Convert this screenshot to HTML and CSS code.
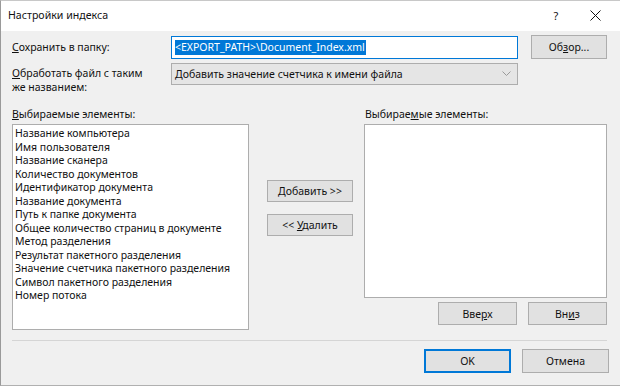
FILE: index.html
```
<!DOCTYPE html>
<html lang="ru">
<head>
<meta charset="utf-8">
<title>Настройки индекса</title>
<link rel="stylesheet" href="styles.css">
</head>
<body>
<div class="dialog">
  <div class="titlebar">
    <span class="title">Настройки индекса</span>
    <span class="tb-help">?</span>
    <span class="tb-close">
      <svg width="11" height="11" viewBox="0 0 11 11"><path d="M0.5 0.5 L10.5 10.5 M10.5 0.5 L0.5 10.5" stroke="#111" stroke-width="1" fill="none"/></svg>
    </span>
  </div>
  <div class="content">
    <div class="row row-save">
      <label class="lbl"><u>С</u>охранить в папку:</label>
      <div class="textbox"><span class="sel">&lt;EXPORT_PATH&gt;\Document_Index.xml</span></div>
      <button class="btn btn-browse">Об<u>з</u>ор...</button>
    </div>
    <div class="row row-dup">
      <label class="lbl lbl-2"><u>О</u>бработать файл с таким<br>же названием:</label>
      <div class="combo">
        <span>Добавить значение счетчика к имени файла</span>
        <svg class="chev" width="9" height="6" viewBox="0 0 9 6"><path d="M0.5 0.5 L4.5 4.5 L8.5 0.5" stroke="#9a9a9a" stroke-width="1" fill="none"/></svg>
      </div>
    </div>
    <div class="lists">
      <div class="col-left">
        <div class="list-lbl"><u>В</u>ыбираемые элементы:</div>
        <ul class="listbox left-box">
          <li>Название компьютера</li>
          <li>Имя пользователя</li>
          <li>Название сканера</li>
          <li>Количество документов</li>
          <li>Идентификатор документа</li>
          <li>Название документа</li>
          <li>Путь к папке документа</li>
          <li>Общее количество страниц в документе</li>
          <li>Метод разделения</li>
          <li>Результат пакетного разделения</li>
          <li>Значение счетчика пакетного разделения</li>
          <li>Символ пакетного разделения</li>
          <li>Номер потока</li>
        </ul>
      </div>
      <div class="col-mid">
        <button class="btn btn-mid"><u>Д</u>обавить &gt;&gt;</button>
        <button class="btn btn-mid">&lt;&lt; <u>У</u>далить</button>
      </div>
      <div class="col-right">
        <div class="list-lbl list-lbl-r">Выбирае<u>м</u>ые элементы:</div>
        <div class="listbox right-box"></div>
        <div class="order-btns">
          <button class="btn btn-order">Вве<u>р</u>х</button>
          <button class="btn btn-order">Вн<u>и</u>з</button>
        </div>
      </div>
    </div>
    <div class="sep"></div>
    <div class="footer">
      <button class="btn btn-foot btn-default">OK</button>
      <button class="btn btn-foot">Отмена</button>
    </div>
  </div>
</div>
</body>
</html>
```
FILE: styles.css
```
* { box-sizing: border-box; }
html, body {
  margin: 0;
  padding: 0;
  background: #f0f0f0;
}
body {
  font-family: "Noto Sans", "Open Sans", sans-serif;
  font-size: 10.5px;
  color: #111;
}
u { text-decoration: underline; text-underline-offset: 1px; }
.dialog {
  width: 620px;
  height: 386px;
  border-left: 1px solid #9a9a9a;
  border-top: 1px solid #c8c8c8;
  border-bottom: 1px solid #b0b0b0;
  background: #f0f0f0;
  display: flex;
  flex-direction: column;
}
.titlebar {
  height: 30px;
  background: #fff;
  display: flex;
  align-items: center;
  padding: 0 0 2px 7px;
  flex-shrink: 0;
}
.title { font-size: 10.6px; flex: 1; }
.tb-help {
  width: 14px;
  font-size: 11px;
  margin-right: 27px;
  text-align: center;
}
.tb-close {
  width: 12px;
  margin-right: 18px;
  display: flex;
}
.content {
  flex: 1;
  padding: 4px 12px 0 11px;
  display: flex;
  flex-direction: column;
}
.row { display: flex; }
.row-save { align-items: center; height: 24px; }
.lbl { width: 159px; flex-shrink: 0; line-height: 14px; white-space: nowrap; }
.textbox {
  width: 347px;
  height: 23px;
  border: 1px solid #0078d7;
  background: #fff;
  padding: 2px 3px;
  display: flex;
  align-items: center;
}
.sel {
  background: #0078d7;
  color: #fff;
  line-height: 15px;
  padding: 0 1px 0 0;
  white-space: nowrap;
}
.btn {
  font-family: inherit;
  font-size: 10.5px;
  color: #111;
  background: #e1e1e1;
  border: 1px solid #adadad;
  padding: 0;
  margin: 0;
  white-space: nowrap;
}
.btn-browse { width: 76px; height: 24px; margin-left: 13px; }
.row-dup { margin-top: 4px; align-items: flex-start; }
.lbl-2 { padding-top: 3px; }
.combo {
  width: 347px;
  height: 22px;
  border: 1px solid #adadad;
  background: #e5e5e5;
  display: flex;
  align-items: center;
  padding: 0 6px 0 3px;
  justify-content: space-between;
  white-space: nowrap;
}
.lists {
  display: grid;
  grid-template-columns: 237px 115px 243px;
  margin-top: 13px;
}
.list-lbl { height: 17px; line-height: 14px; white-space: nowrap; }
.list-lbl-r { padding-left: 1px; }
.listbox {
  background: #fff;
  border: 1px solid #adadad;
  margin: 0;
  list-style: none;
}
.left-box {
  height: 206px;
  padding: 2px 2px;
}
.left-box li { line-height: 13.5px; height: 13.5px; white-space: nowrap; }
.col-mid {
  display: flex;
  flex-direction: column;
  padding: 73px 0 0 18px;
  gap: 12px;
}
.btn-mid { width: 86px; height: 22px; }
.right-box { height: 174px; }
.order-btns {
  display: flex;
  justify-content: flex-end;
  gap: 11px;
  margin-top: 4px;
}
.btn-order { width: 79px; height: 23px; }
.sep {
  height: 1px;
  background: #d5d5d5;
  margin-top: 10px;
  width: 595px;
}
.footer {
  display: flex;
  justify-content: flex-end;
  gap: 11px;
  margin-top: 8px;
  margin-right: -1px;
}
.btn-foot { width: 87px; height: 24px; }
.btn-default { border: 2px solid #0078d7; }
```
